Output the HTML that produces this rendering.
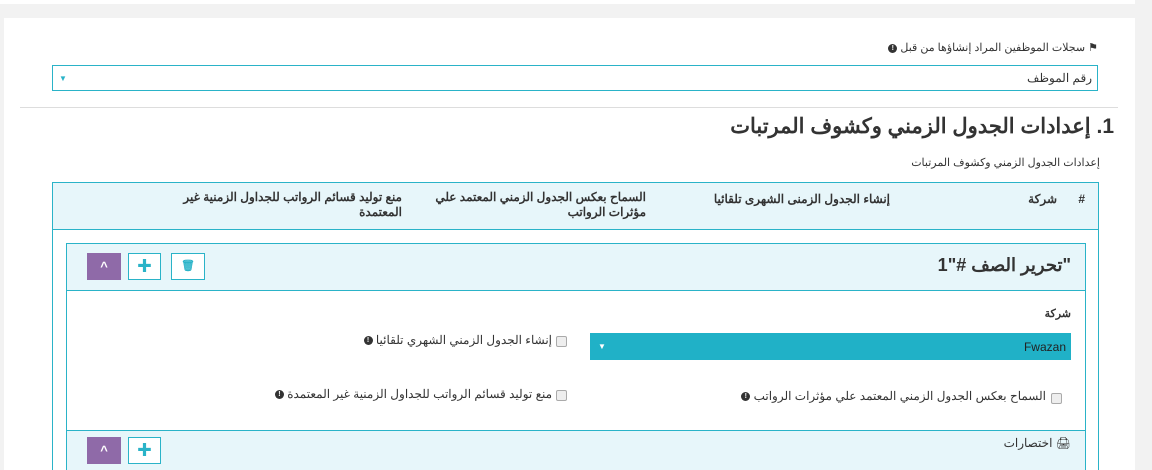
<!DOCTYPE html>
<html><head><meta charset="utf-8"><style>
html,body{margin:0;width:1152px;height:470px;overflow:hidden}
body{background:#f2f2f2;position:relative;font-family:"Liberation Sans","Noto Sans CJK SC",sans-serif;color:#333;}
.a{position:absolute}
.t{position:absolute;direction:rtl;white-space:nowrap}
.btn{position:absolute;width:32px;height:25px;box-sizing:border-box;border:1px solid #2ab3c8;background:#fff;color:#2ab3c8;text-align:center;font-weight:bold;font-size:15px;line-height:22px}
.up{position:absolute;width:34px;height:27px;background:#8f6aa8;color:#fff;text-align:center;font-size:13px;line-height:27px;font-weight:bold}
.cb{position:absolute;width:9px;height:9px;border:1px solid #aaa;border-radius:2px;background:#eee}
.i{display:inline-block;width:9px;height:9px;border-radius:50%;background:#333;color:#fff;font-size:7px;line-height:9px;text-align:center;font-weight:bold;vertical-align:middle}
</style></head><body>
<div class="a" style="left:0;top:0;width:1135px;height:4px;background:#fff"></div>
<div class="a" style="left:4px;top:18px;width:1131px;height:452px;background:#fff"></div>
<div class="t" style="right:54px;top:41px;font-size:11px">⚑ سجلات الموظفين المراد إنشاؤها من قبل <span class="i">!</span></div>
<div class="a" style="left:52px;top:65px;width:1046px;height:26px;border:1px solid #2ab3c8;box-sizing:border-box"></div>
<div class="a" style="left:59px;top:74px;font-size:8px;color:#2ab3c8">▼</div>
<div class="t" style="right:60px;top:71px;font-size:12px">رقم الموظف</div>
<div class="a" style="left:20px;top:107px;width:1098px;height:1px;background:#ddd"></div>
<div class="t" style="right:38px;top:114px;font-size:21px;font-weight:bold">1. إعدادات الجدول الزمني وكشوف المرتبات</div>
<div class="t" style="right:52px;top:156px;font-size:11px">إعدادات الجدول الزمني وكشوف المرتبات</div>
<div class="a" style="left:52px;top:182px;width:1047px;height:288px;border:1px solid #2ab3c8;border-bottom:none;box-sizing:border-box"></div>
<div class="a" style="left:53px;top:183px;width:1045px;height:46px;background:#e7f6fa;border-bottom:1px solid #2ab3c8"></div>
<div class="t" style="right:67px;top:192px;font-size:12px;font-weight:bold">#</div>
<div class="t" style="right:95px;top:192px;font-size:12px;font-weight:bold">شركة</div>
<div class="t" style="right:262px;top:192px;font-size:12px;font-weight:bold">إنشاء الجدول الزمنى الشهرى تلقائيا</div>
<div class="t" style="right:506px;top:190px;font-size:12px;font-weight:bold;line-height:15px">السماح بعكس الجدول الزمني المعتمد علي<br>مؤثرات الرواتب</div>
<div class="t" style="right:750px;top:190px;font-size:12px;font-weight:bold;line-height:15px">منع توليد قسائم الرواتب للجداول الزمنية غير<br>المعتمدة</div>
<div class="a" style="left:66px;top:243px;width:1020px;height:227px;border:1px solid #2ab3c8;border-bottom:none;box-sizing:border-box"></div>
<div class="a" style="left:67px;top:244px;width:1018px;height:46px;background:#e7f6fa;border-bottom:1px solid #2ab3c8"></div>
<div class="t" style="right:81px;top:255px;font-size:18px;font-weight:bold">"تحرير الصف #"1</div>
<div class="up" style="left:87px;top:253px">^</div>
<div class="btn" style="left:128px;top:253px;height:27px;width:33px;line-height:25px">✚</div>
<div class="btn" style="left:171px;top:253px;height:27px;width:34px;font-size:11px;line-height:25px">🗑</div>
<div class="t" style="right:81px;top:307px;font-size:11px;font-weight:bold">شركة</div>
<div class="a" style="left:590px;top:333px;width:481px;height:27px;background:#20b1c7"></div>
<div class="a" style="left:598px;top:342px;font-size:8px;color:#fff">▼</div>
<div class="t" style="right:86px;top:340px;font-size:12px;color:#222">Fwazan</div>
<div class="cb" style="left:556px;top:336px"></div>
<div class="t" style="right:600px;top:333px;font-size:12px">إنشاء الجدول الزمني الشهري تلقائيا <span class="i">!</span></div>
<div class="cb" style="left:1051px;top:393px"></div>
<div class="t" style="right:106px;top:389px;font-size:12px">السماح بعكس الجدول الزمني المعتمد علي مؤثرات الرواتب <span class="i">!</span></div>
<div class="cb" style="left:556px;top:390px"></div>
<div class="t" style="right:600px;top:387px;font-size:12px">منع توليد قسائم الرواتب للجداول الزمنية غير المعتمدة <span class="i">!</span></div>
<div class="a" style="left:67px;top:430px;width:1018px;height:40px;background:#e7f6fa;border-top:1px solid #2ab3c8"></div>
<div class="t" style="right:81px;top:436px;font-size:12px">🖨 اختصارات</div>
<div class="up" style="left:87px;top:437px">^</div>
<div class="btn" style="left:128px;top:437px;height:27px;width:33px;line-height:25px">✚</div>
</body></html>
